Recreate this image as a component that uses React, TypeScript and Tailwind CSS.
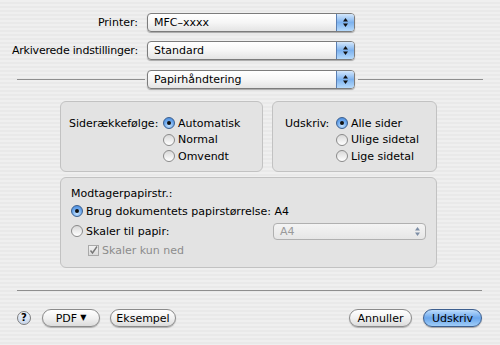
import React from 'react';

const stripes =
  'bg-[repeating-linear-gradient(to_bottom,#efefef_0px,#efefef_2px,#e9e9e9_2px,#e9e9e9_4px)]';

function Arrows({ dim }: { dim?: boolean }) {
  const c = dim ? '#7d8ea6' : '#111';
  return (
    <svg width="7" height="11" viewBox="0 0 7 11">
      <path d="M3.5 1 L6 4.5 L1 4.5 Z" fill={c} />
      <path d="M3.5 10 L6 6.5 L1 6.5 Z" fill={c} />
    </svg>
  );
}

function Popup({ label, className }: { label: string; className: string }) {
  return (
    <div
      className={`flex h-[19px] items-stretch overflow-hidden rounded-[4px] border border-[#7c7c7c] bg-gradient-to-b from-white via-[#f6f6f6] to-[#e4e4e4] shadow-[0_1px_1px_rgba(0,0,0,0.3)] ${className}`}
    >
      <span className="flex flex-1 items-center pl-[6px] leading-none">{label}</span>
      <span className="flex w-[18px] items-center justify-center border-l border-[#5a7fb3] bg-gradient-to-b from-[#d4e7fb] via-[#7db2ee] to-[#b6dafb]">
        <Arrows />
      </span>
    </div>
  );
}

function DimPopup({ label, className }: { label: string; className: string }) {
  return (
    <div
      className={`flex h-[17px] items-center rounded-[4px] border border-[#b0b0b0] bg-gradient-to-b from-[#f4f4f4] to-[#e6e6e6] ${className}`}
    >
      <span className="flex-1 pl-[6px] text-[#9a9a9a]">{label}</span>
      <span className="flex w-[16px] items-center justify-center">
        <Arrows dim />
      </span>
    </div>
  );
}

function Radio({ checked }: { checked?: boolean }) {
  if (checked) {
    return (
      <span className="flex h-[12px] w-[12px] shrink-0 items-center justify-center rounded-full border border-[#3b5f8e] bg-[radial-gradient(circle_at_50%_75%,#c7e4ff_0%,#6aa6ec_55%,#3f82d6_100%)]">
        <span className="h-[4px] w-[4px] rounded-full bg-[#111]" />
      </span>
    );
  }
  return (
    <span className="h-[12px] w-[12px] shrink-0 rounded-full border border-[#8a8a8a] bg-gradient-to-b from-[#d9d9d9] to-white" />
  );
}

function RadioRow({ label, checked }: { label: string; checked?: boolean }) {
  return (
    <div className="flex h-[16.5px] items-center gap-[3px]">
      <Radio checked={checked} />
      <span>{label}</span>
    </div>
  );
}

function Pill({ children, className }: { children: React.ReactNode; className: string }) {
  return (
    <div
      className={`flex h-[18px] items-center justify-center rounded-full border border-[#8b8b8b] bg-gradient-to-b from-white via-[#f1f1f1] to-[#dcdcdc] shadow-[0_1px_1px_rgba(0,0,0,0.25)] ${className}`}
    >
      {children}
    </div>
  );
}

export default function App() {
  return (
    <div
      className={`h-[345px] w-[500px] overflow-hidden ${stripes} font-['DejaVu_Sans',Verdana,sans-serif] text-[11px] leading-none text-black`}
    >
      <div className="flex flex-col pt-[13px]">
        {/* Printer */}
        <div className="flex h-[19px] items-center">
          <span className="w-[138px] text-right">Printer:</span>
          <Popup label="MFC–xxxx" className="ml-[9px] w-[208px]" />
        </div>

        {/* Presets */}
        <div className="mt-[9px] flex h-[19px] items-center">
          <span className="w-[138px] whitespace-nowrap text-right tracking-[-0.2px]">Arkiverede indstillinger:</span>
          <Popup label="Standard" className="ml-[9px] w-[208px]" />
        </div>

        {/* Pane selector */}
        <div className="mt-[10px] flex h-[19px] items-center pl-[17px]">
          <div className="h-px w-[128px] bg-[#8e8e8e]" />
          <Popup label="Papirhåndtering" className="ml-[2px] w-[208px]" />
          <div className="ml-[3px] h-px w-[125px] bg-[#8e8e8e]" />
        </div>

        {/* Top boxes */}
        <div className="mt-[12px] flex pl-[60px]">
          <div className="flex h-[71px] w-[203px] rounded-[6px] border border-[#c2c2c2] bg-[#e3e3e3] pl-[8px] pt-[13px]">
            <span className="flex h-[16.5px] w-[94px] items-center">Siderækkefølge:</span>
            <div className="flex flex-col">
              <RadioRow label="Automatisk" checked />
              <RadioRow label="Normal" />
              <RadioRow label="Omvendt" />
            </div>
          </div>
          <div className="ml-[9px] flex h-[71px] w-[165px] rounded-[6px] border border-[#c2c2c2] bg-[#e3e3e3] pl-[12px] pt-[13px]">
            <span className="flex h-[16.5px] w-[51px] items-center">Udskriv:</span>
            <div className="flex flex-col">
              <RadioRow label="Alle sider" checked />
              <RadioRow label="Ulige sidetal" />
              <RadioRow label="Lige sidetal" />
            </div>
          </div>
        </div>

        {/* Paper size box */}
        <div className="ml-[60px] mt-[5px] flex h-[91px] w-[377px] flex-col rounded-[6px] border border-[#c2c2c2] bg-[#e3e3e3] pl-[10px] pr-[10px] pt-[7px]">
          <div className="flex h-[16px] items-center">Modtagerpapirstr.:</div>
          <div className="flex h-[20px] items-center gap-[3px]">
            <Radio checked />
            <span>Brug dokumentets papirstørrelse: A4</span>
          </div>
          <div className="flex h-[20px] items-center gap-[3px]">
            <Radio />
            <span>Skaler til papir:</span>
            <DimPopup label="A4" className="ml-auto w-[153px]" />
          </div>
          <div className="flex h-[18px] items-center gap-[3px] pl-[17px] text-[#8c8c8c]">
            <span className="flex h-[11px] w-[11px] items-center justify-center border border-[#a9a9a9] bg-gradient-to-b from-[#f2f2f2] to-[#dadada]">
              <svg width="9" height="9" viewBox="0 0 9 9">
                <path d="M1.5 4.5 L3.5 7 L8 0.5" stroke="#777" strokeWidth="1.4" fill="none" />
              </svg>
            </span>
            <span>Skaler kun ned</span>
          </div>
        </div>

        {/* Divider */}
        <div className="ml-[17px] mt-[22px] h-px w-[465px] bg-[#8e8e8e]" />

        {/* Buttons */}
        <div className="mt-[18px] flex h-[18px] items-center pl-[17px] pr-[18px]">
          <div className="flex h-[14px] w-[14px] items-center justify-center rounded-full border border-[#7d7d7d] bg-gradient-to-b from-[#eef3fb] to-[#c9d6ea] text-[10px] font-bold">
            ?
          </div>
          <Pill className="ml-[11px] w-[58px] gap-[3px]">
            <span>PDF</span>
            <span className="text-[8px]">▼</span>
          </Pill>
          <Pill className="ml-[10px] w-[66px]">Eksempel</Pill>
          <Pill className="ml-auto w-[63px]">Annuller</Pill>
          <div className="ml-[11px] flex h-[18px] w-[59px] items-center justify-center rounded-full border border-[#3d5f8f] bg-gradient-to-b from-[#bcdcfb] via-[#6aa6ec] to-[#9fcdf8] shadow-[0_1px_1px_rgba(0,0,0,0.3)]">
            Udskriv
          </div>
        </div>
      </div>
    </div>
  );
}
